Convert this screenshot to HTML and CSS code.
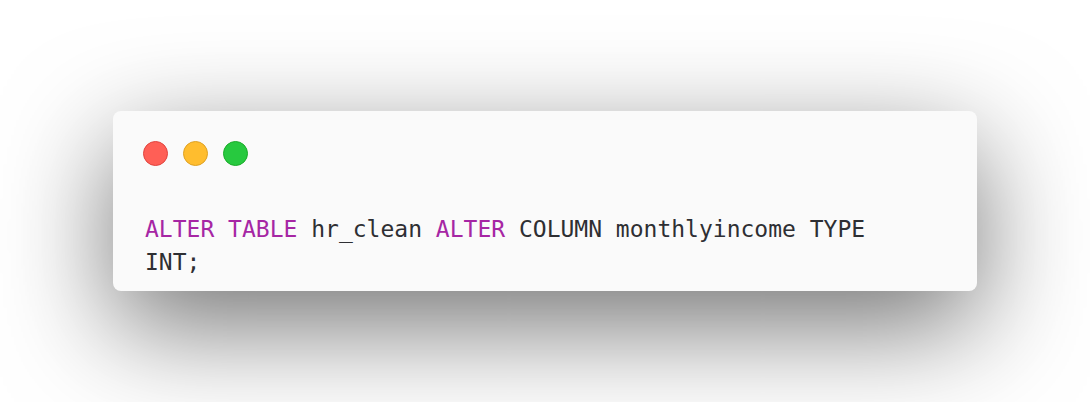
FILE: index.html
```html
<!DOCTYPE html>
<html>
<head>
<meta charset="utf-8">
<link rel="stylesheet" href="styles.css">
</head>
<body>
<div class="stage">
  <div class="window">
    <div class="controls">
      <span class="dot red"></span>
      <span class="dot yellow"></span>
      <span class="dot green"></span>
    </div>
    <pre class="code"><span class="kw">ALTER</span> <span class="kw">TABLE</span> hr_clean <span class="kw">ALTER</span> COLUMN monthlyincome TYPE
INT;</pre>
  </div>
</div>
</body>
</html>
```

FILE: styles.css
```css
html, body {
  margin: 0;
  padding: 0;
  background: #ffffff;
}
.stage {
  width: 1090px;
  height: 402px;
  display: flex;
  align-items: center;
  justify-content: center;
  overflow: hidden;
}
.window {
  width: 864px;
  height: 180px;
  box-sizing: border-box;
  padding: 30px 30px 12px 30px;
  background: #fafafa;
  border-radius: 8px;
  box-shadow: 0 35px 110px rgba(0, 0, 0, 0.55);
  display: flex;
  flex-direction: column;
}
.controls {
  display: flex;
  gap: 15px;
  height: 25px;
}
.dot {
  width: 25px;
  height: 25px;
  border-radius: 50%;
  box-sizing: border-box;
}
.red { background: #ff5f56; border: 1px solid #e0443e; }
.yellow { background: #ffbd2e; border: 1px solid #dea123; }
.green { background: #27c93f; border: 1px solid #1aab29; }
.code {
  margin: 47px 0 0 0;
  padding-left: 2px;
  font-family: "DejaVu Sans Mono", monospace;
  font-size: 23px;
  line-height: 33px;
  color: #2e2f33;
  white-space: pre;
}
.kw {
  color: #a626a4;
}
```
